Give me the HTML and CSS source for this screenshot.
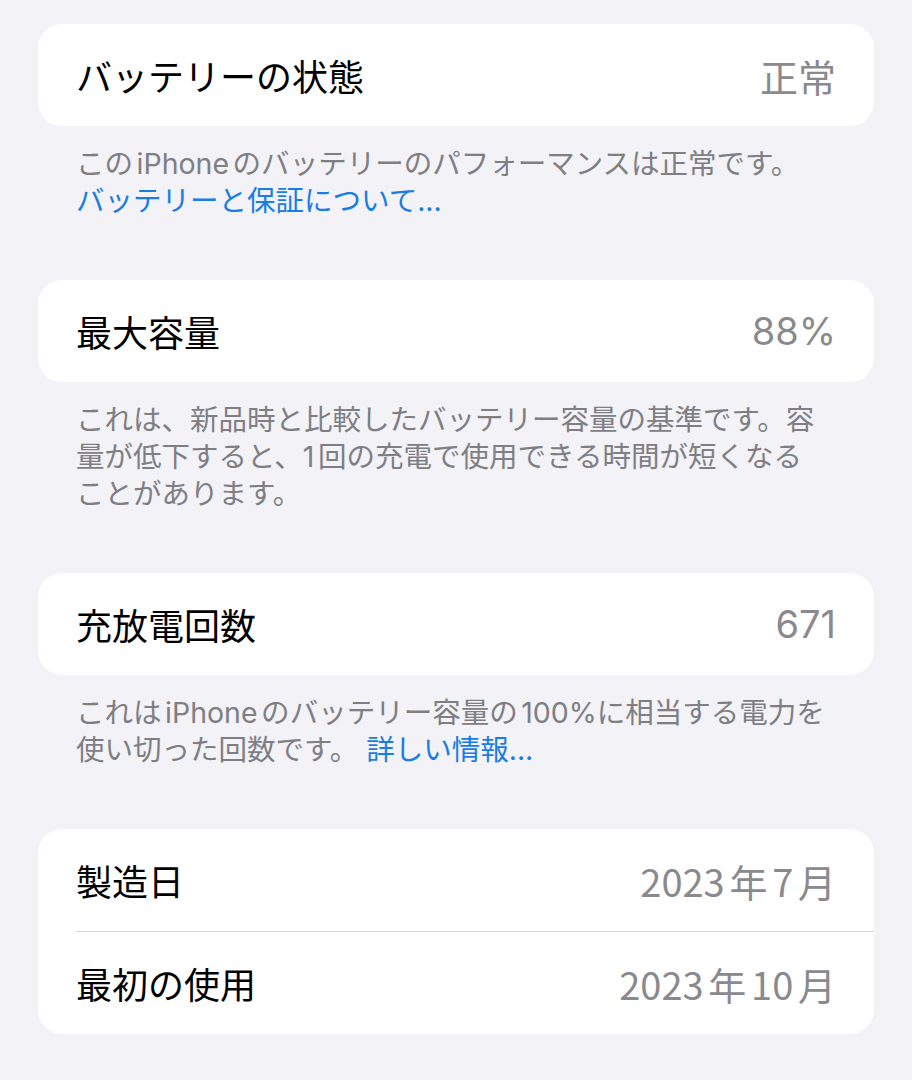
FILE: index.html
```html
<!DOCTYPE html>
<html lang="ja">
<head>
    <meta charset="UTF-8">
    <meta name="viewport" content="width=device-width, initial-scale=1.0">
    <title>バッテリーの状態</title>
    <link rel="stylesheet" href="styles.css">
</head>
<body>
    <main class="settings">
        <section class="group">
            <div class="card">
                <div class="row">
                    <span class="row-label">バッテリーの状態</span>
                    <span class="row-value">正常</span>
                </div>
            </div>
            <p class="group-footer">
                このiPhoneのバッテリーのパフォーマンスは正常です。<br>
                <a class="link" href="#">バッテリーと保証について...</a>
            </p>
        </section>

        <section class="group">
            <div class="card">
                <div class="row">
                    <span class="row-label">最大容量</span>
                    <span class="row-value">88%</span>
                </div>
            </div>
            <p class="group-footer">
                これは、新品時と比較したバッテリー容量の基準です。容<br>量が低下すると、1回の充電で使用できる時間が短くなる<br>ことがあります。
            </p>
        </section>

        <section class="group">
            <div class="card">
                <div class="row">
                    <span class="row-label">充放電回数</span>
                    <span class="row-value">671</span>
                </div>
            </div>
            <p class="group-footer">
                これはiPhoneのバッテリー容量の100%に相当する電力を<br>使い切った回数です。 <a class="link" href="#">詳しい情報...</a>
            </p>
        </section>

        <section class="group">
            <div class="card">
                <div class="row">
                    <span class="row-label">製造日</span>
                    <span class="row-value date">2023年7月</span>
                </div>
                <div class="row">
                    <span class="row-label">最初の使用</span>
                    <span class="row-value date">2023年10月</span>
                </div>
            </div>
        </section>
    </main>
</body>
</html>
```

FILE: styles.css
```css
body {
    margin: 0;
    padding: 0;
    background: #f2f2f7;
    font-family: "Inter", "Noto Sans CJK JP", sans-serif;
    color: #000;
    text-autospace: normal;
}

.settings {
    padding: 24px 38px 0;
}

.card {
    background: #fff;
    border-radius: 24px;
    padding-left: 38px;
    overflow: hidden;
}

.row {
    height: 102px;
    padding-right: 38px;
    display: flex;
    justify-content: space-between;
    align-items: center;
    font-size: 36px;
}
.row + .row {
    border-top: 1px solid #d6d6da;
}

.row-label {
    color: #000;
}

.row-value {
    color: #8a8a8e;
    font-size: 38px;
}
.row-value.date {
    font-family: "Noto Sans CJK JP", sans-serif;
}

.group-footer {
    margin: 0;
    padding: 19px 38px 61px;
    font-size: 28.5px;
    line-height: 37px;
    color: #7e7e83;
}

.link {
    color: #1a7de4;
    text-decoration: none;
}
```
